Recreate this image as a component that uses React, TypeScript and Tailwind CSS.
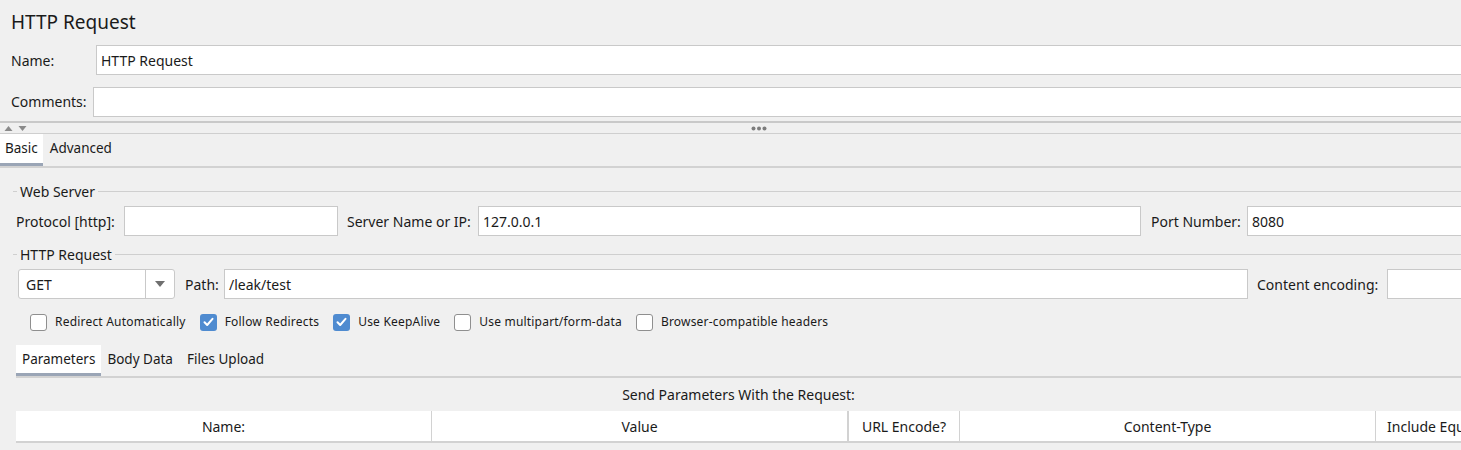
import React from "react";

function Field({ value, className = "" }: { value?: string; className?: string }) {
  return (
    <div
      className={`h-[30px] shrink-0 bg-white border border-[#c9c9c9] flex items-center pl-[4px] text-[14px] whitespace-nowrap ${className}`}
    >
      {value}
    </div>
  );
}

function Legend({ title }: { title: string }) {
  return (
    <div className="flex items-center h-[22px]">
      <div className="ml-[13px] w-[4px] h-px bg-[#cfcfcf]" />
      <span className="px-[3px] text-[14px] leading-[22px] pt-[2px]">{title}</span>
      <div className="flex-1 h-px bg-[#cfcfcf]" />
    </div>
  );
}

function Check({ label, checked }: { label: string; checked?: boolean }) {
  return (
    <div className="flex items-center gap-[8px]">
      {checked ? (
        <div className="w-[17px] h-[17px] rounded-[3px] bg-[#4f8bd0] flex items-center justify-center">
          <svg width="11" height="10" viewBox="0 0 11 10">
            <path d="M1.5 5.2 L4.2 8 L9.5 1.8" fill="none" stroke="white" strokeWidth="2" strokeLinecap="round" strokeLinejoin="round" />
          </svg>
        </div>
      ) : (
        <div className="w-[17px] h-[17px] rounded-[3px] bg-white border border-[#8f8f8f]" />
      )}
      <span className="text-[12px] tracking-[0.2px] whitespace-nowrap">{label}</span>
    </div>
  );
}

function Tab({ label, active, className = "" }: { label: string; active?: boolean; className?: string }) {
  return (
    <div
      className={`h-full flex items-center px-[6px] text-[13.5px] whitespace-nowrap border-b-[3px] ${
        active ? "bg-white border-[#9aa5b6]" : "border-transparent"
      } ${className}`}
    >
      {label}
    </div>
  );
}

export default function App() {
  return (
    <div className="w-[1461px] h-[450px] overflow-hidden bg-[#f0f0f0] text-[#1a1a1a] font-['Noto_Sans',sans-serif]">
      {/* header */}
      <div className="h-[45px] pl-[11px] pt-[8px] text-[19px] leading-[28px]">HTTP Request</div>

      <div className="flex items-center h-[30px]">
        <span className="w-[96px] pl-[11px] text-[14px]">Name:</span>
        <Field value="HTTP Request" className="flex-1 border-r-0" />
      </div>
      <div className="flex items-center h-[29px] mt-[12px]">
        <span className="w-[93px] pl-[11px] text-[14px]">Comments:</span>
        <Field className="flex-1 h-[29px] border-r-0" />
      </div>

      {/* splitter */}
      <div className="mt-[5px] h-[2px] bg-[#c9c9c9]" />
      <div className="relative h-[11px] border-b border-[#cfcfcf]">
        <svg className="absolute left-[4px] top-[2px]" width="24" height="7" viewBox="0 0 24 7">
          <path d="M0.5 6 L4.5 1 L8.5 6 Z" fill="#8a8a8a" />
          <path d="M14.5 1 L22.5 1 L18.5 6 Z" fill="#8a8a8a" />
        </svg>
        <svg className="absolute left-[751px] top-[3px]" width="16" height="5" viewBox="0 0 16 5">
          <circle cx="2.5" cy="2.5" r="2" fill="#7c7c7c" />
          <circle cx="8" cy="2.5" r="2" fill="#7c7c7c" />
          <circle cx="13.5" cy="2.5" r="2" fill="#7c7c7c" />
        </svg>
      </div>

      {/* main tabs */}
      <div className="flex h-[34px] border-b-[2px] border-[#d2d2d2]">
        <Tab label="Basic" active className="pl-[5px] pr-[5px] -mb-[2px]" />
        <Tab label="Advanced" className="ml-[1px]" />
      </div>

      {/* Web Server */}
      <div className="pt-[12px]">
        <Legend title="Web Server" />
        <div className="flex items-center h-[30px] mt-[4px]">
          <span className="w-[124px] pl-[16px] text-[14px] whitespace-nowrap">Protocol [http]:</span>
          <Field className="w-[214px]" />
          <span className="w-[140px] pl-[9px] text-[14px] whitespace-nowrap">Server Name or IP:</span>
          <Field value="127.0.0.1" className="w-[663px]" />
          <span className="w-[106px] pl-[10px] text-[14px] whitespace-nowrap">Port Number:</span>
          <Field value="8080" className="flex-1 border-r-0" />
        </div>
      </div>

      {/* HTTP Request */}
      <div className="pt-[7px]">
        <Legend title="HTTP Request" />
        <div className="flex items-center h-[30px] mt-[4px]">
          <div className="ml-[18px] w-[157px] h-[30px] shrink-0 bg-white border border-[#c9c9c9] rounded-[3px] flex">
            <div className="flex-1 flex items-center pl-[7px] text-[14px]">GET</div>
            <div className="w-[29px] border-l border-[#c9c9c9] flex items-center justify-center">
              <svg width="10" height="6" viewBox="0 0 10 6">
                <path d="M0 0 L10 0 L5 6 Z" fill="#6f6f6f" />
              </svg>
            </div>
          </div>
          <span className="w-[49px] pl-[10px] text-[14px]">Path:</span>
          <Field value="/leak/test" className="w-[1024px]" />
          <span className="w-[139px] pl-[9px] text-[14px] whitespace-nowrap">Content encoding:</span>
          <Field className="flex-1 border-r-0" />
        </div>
      </div>

      {/* options */}
      <div className="flex items-center h-[18px] mt-[14px] pl-[30px] gap-[14px]">
        <Check label="Redirect Automatically" />
        <Check label="Follow Redirects" checked />
        <Check label="Use KeepAlive" checked />
        <Check label="Use multipart/form-data" />
        <Check label="Browser-compatible headers" />
      </div>

      {/* parameter tabs */}
      <div className="ml-[16px] mt-[14px] flex h-[33px] border-b-[2px] border-[#d2d2d2]">
        <Tab label="Parameters" active className="-mb-[2px]" />
        <Tab label="Body Data" />
        <Tab label="Files Upload" className="pl-[8px]" />
      </div>

      <div className="ml-[16px] h-[33px] flex items-center justify-center text-[14px]">
        Send Parameters With the Request:
      </div>

      {/* parameters table header */}
      <div className="ml-[16px] flex h-[32px] bg-white border-b-[2px] border-[#d2d2d2] text-[14px]">
        <div className="w-[416px] shrink-0 flex items-center justify-center border-r border-[#d2d2d2]">Name:</div>
        <div className="w-[417px] shrink-0 flex items-center justify-center border-r-[2px] border-[#d2d2d2]">Value</div>
        <div className="w-[111px] shrink-0 flex items-center justify-center border-r border-[#d2d2d2]">URL Encode?</div>
        <div className="w-[416px] shrink-0 flex items-center justify-center border-r border-[#d2d2d2]">Content-Type</div>
        <div className="w-[124px] shrink-0 flex items-center justify-center whitespace-nowrap">Include Equals?</div>
      </div>
    </div>
  );
}
